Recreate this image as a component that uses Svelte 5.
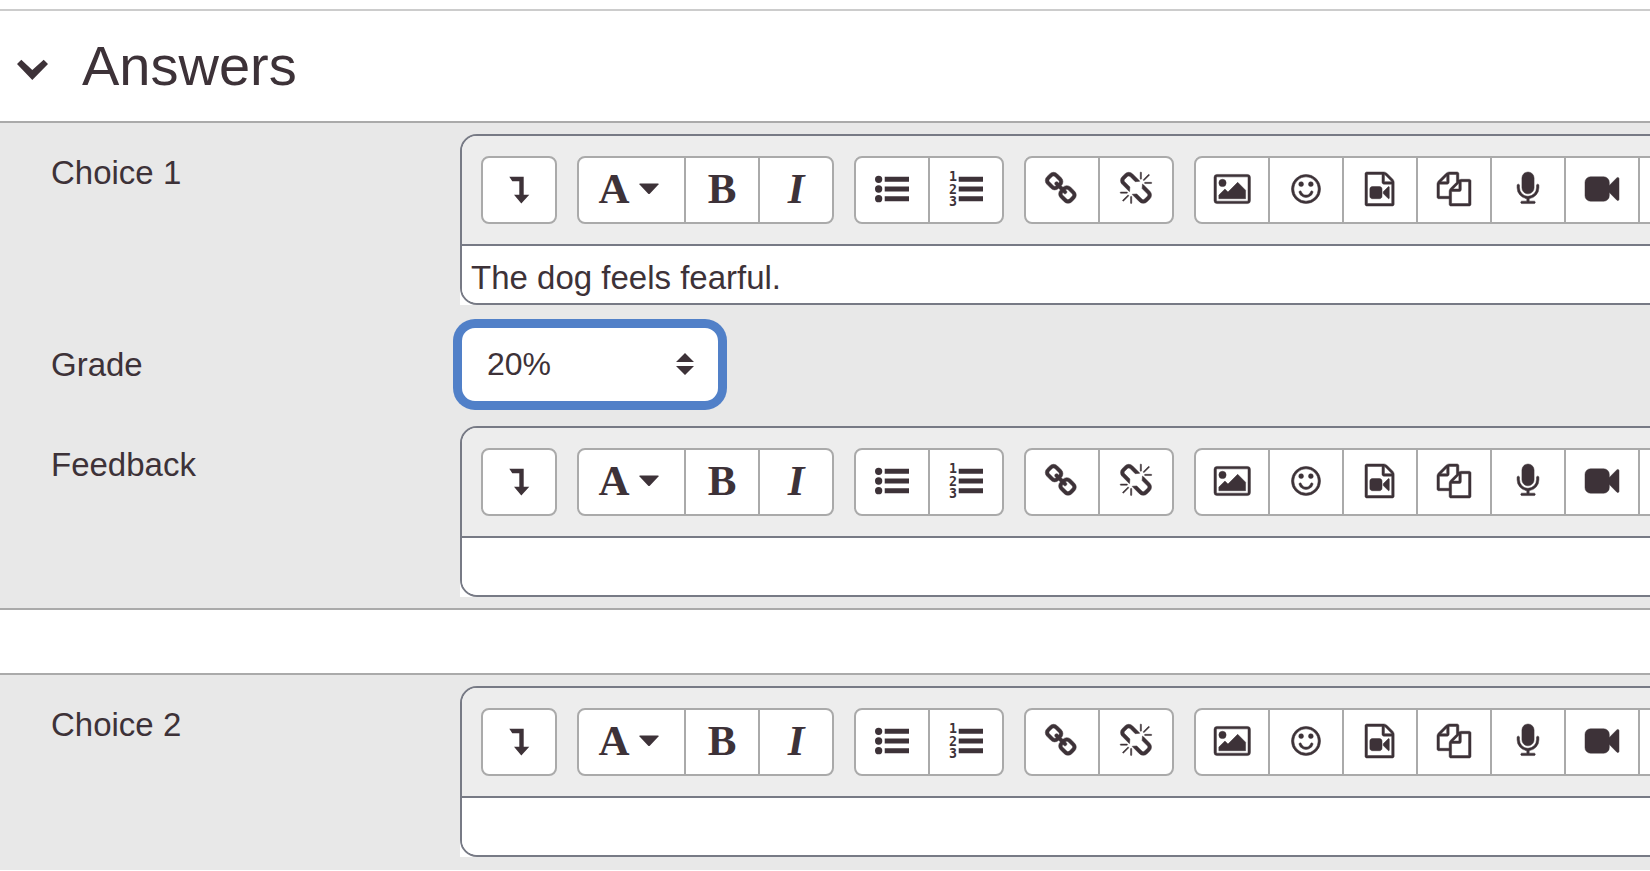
<script>
  let open = $state(true);
  let choices = $state([
    { id: 1, answer: 'The dog feels fearful.', grade: '20%', feedback: '', complete: true },
    { id: 2, answer: '', grade: 'None', feedback: '', complete: false }
  ]);
  const grades = ['None', '100%', '50%', '33.33333%', '25%', '20%', '10%'];

  const bullets =
    'M192 192a192 192 0 1 0 0 384a192 192 0 1 0 0-384zM192 704a192 192 0 1 0 0 384a192 192 0 1 0 0-384zM192 1216a192 192 0 1 0 0 384a192 192 0 1 0 0-384z';
  const bars = 'M512 256h1280v256H512zM512 768h1280v256H512zM512 1280h1280v256H512z';

  const linkGroup = [
    {
      label: 'Link',
      width: 1792,
      path: 'M1456 1216q0-40-28-68l-208-208q-28-28-68-28-42 0-72 32 3 3 19 18.5t21.5 21.5 15 19 13 25.5 3.5 27.5q0 40-28 68t-68 28q-15 0-27.5-3.5t-25.5-13-19-15-21.5-21.5-18.5-19q-33 31-33 73 0 40 28 68l206 207q27 27 68 27 40 0 68-26l147-146q28-28 28-67zm-703-705q0-40-28-68l-206-207q-28-28-68-28-39 0-68 27l-147 146q-28 28-28 67 0 40 28 68l208 208q27 27 68 27 42 0 72-31-3-3-19-18.5t-21.5-21.5-15-19-13-25.5-3.5-27.5q0-40 28-68t68-28q15 0 27.5 3.5t25.5 13 19 15 21.5 21.5 18.5 19q33-31 33-73zm895 705q0 120-85 203l-147 146q-83 83-203 83-121 0-204-85l-206-207q-83-83-83-203 0-123 88-209l-88-88q-86 88-208 88-120 0-204-84l-208-208q-84-84-84-204t85-203l147-146q83-83 203-83 121 0 204 85l206 207q83 83 83 203 0 123-88 209l88 88q86-88 208-88 120 0 204 84l208 208q84 84 84 204z'
    },
    {
      label: 'Unlink',
      width: 1792,
      path: 'M503 1271l-256 256q-10 9-23 9-12 0-23-9-9-10-9-23t9-23l256-256q10-9 23-9t23 9q9 10 9 23t-9 23zm169 41v320q0 14-9 23t-23 9-23-9-9-23v-320q0-14 9-23t23-9 23 9 9 23zm-224-224q0 14-9 23t-23 9h-320q-14 0-23-9t-9-23 9-23 23-9h320q14 0 23 9t9 23zm1264 128q0 120-85 203l-147 146q-83 83-203 83-121 0-204-85l-334-335q-21-21-42-56l239-18 273 274q28 28 68 28.5t68-27.5l147-146q28-28 28-67 0-40-28-68l-274-275 18-239q35 21 56 42l336 336q84 86 84 204zm-617-724l-239 18-273-274q-28-28-68-28-39 0-68 27l-147 146q-28 28-28 67 0 40 28 68l274 274-18 240q-35-21-56-42l-336-336q-84-86-84-204 0-120 85-203l147-146q83-83 203-83 121 0 204 85l334 335q21 21 42 56zm633 84q0 14-9 23t-23 9h-320q-14 0-23-9t-9-23 9-23 23-9h320q14 0 23 9t9 23zm-544-544v320q0 14-9 23t-23 9-23-9-9-23v-320q0-14 9-23t23-9 23 9 9 23zm407 151l-256 256q-11 9-23 9t-23-9q-9-10-9-23t9-23l256-256q10-9 23-9t23 9q9 10 9 23t-9 23z'
    }
  ];

  const mediaGroup = [
    {
      label: 'Insert image',
      width: 1920,
      path: 'M640 576a192 192 0 1 1-384 0a192 192 0 1 1 384 0zM1664 960v448H256v-192l320-320 160 160 512-512zM160 256q-32 0-32 32v1216q0 32 32 32h1600q32 0 32-32V288q0-32-32-32zM160 128h1600q160 0 160 160v1216q0 160-160 160H160Q0 1664 0 1504V288Q0 128 160 128z'
    },
    {
      label: 'Emoji picker',
      width: 1792,
      path: 'M1262 1075q-37 121-138 195t-228 74-228-74-138-195q-8-25 4-48.5t38-31.5q25-8 48.5 4t31.5 38q25 80 92.5 129.5t151.5 49.5 151.5-49.5 92.5-129.5q8-26 32-38t49-4 37 31.5 4 48.5zM768 640a128 128 0 1 1-256 0a128 128 0 1 1 256 0zM1280 640a128 128 0 1 1-256 0a128 128 0 1 1 256 0zM1536 896a640 640 0 1 0-1280 0a640 640 0 1 0 1280 0zM1664 896a768 768 0 1 1-1536 0a768 768 0 1 1 1536 0z'
    },
    {
      label: 'Insert media',
      width: 1536,
      path: 'M1468 380q28 28 48 76t20 88v1152q0 40-28 68t-68 28H96q-40 0-68-28t-28-68V96q0-40 28-68T96 0h896q40 0 88 20t76 48zm-444-244v376h376q-10-29-22-41l-313-313q-12-12-41-22zm384 1528V640H992q-40 0-68-28t-28-68V128H128v1536h1280zM768 768q52 0 90 38t38 90v384q0 52-38 90t-90 38H384q-52 0-90-38t-38-90V896q0-52 38-90t90-38h384zm492 2q20 8 20 30v576q0 22-20 30-8 2-12 2-14 0-23-9l-265-266v-90l265-266q9-9 23-9 4 0 12 2z'
    },
    {
      label: 'Manage files',
      width: 1792,
      path: 'M1696 384q40 0 68 28t28 68v1216q0 40-28 68t-68 28h-960q-40 0-68-28t-28-68v-288h-544q-40 0-68-28t-28-68v-672q0-40 20-88t48-76l408-408q28-28 76-48t88-20h416q40 0 68 28t28 68v328q68-40 128-40h416zm-544 213l-299 299h299v-299zm-640-384l-299 299h299v-299zm196 647l316-316v-416h-384v416q0 40-28 68t-68 28h-416v640h512v-256q0-40 20-88t48-76zm956 804v-1152h-384v416q0 40-28 68t-68 28h-416v640h896z'
    },
    {
      label: 'Record audio',
      width: 1792,
      path: 'M1472 704v128q0 221-147.5 384.5t-364.5 187.5v132h256q26 0 45 19t19 45-19 45-45 19h-640q-26 0-45-19t-19-45 19-45 45-19h256v-132q-217-24-364.5-187.5t-147.5-384.5v-128q0-26 19-45t45-19 45 19 19 45v128q0 185 131.5 316.5t316.5 131.5 316.5-131.5 131.5-316.5v-128q0-26 19-45t45-19 45 19 19 45zm-256-384v512q0 132-94 226t-226 94-226-94-94-226v-512q0-132 94-226t226-94 226 94 94 226z'
    },
    {
      label: 'Record video',
      width: 1792,
      path: 'M1792 352v1088q0 42-39 59-13 5-25 5-27 0-45-19l-403-403v166q0 119-84.5 203.5t-203.5 84.5h-704q-119 0-203.5-84.5t-84.5-203.5v-704q0-119 84.5-203.5t203.5-84.5h704q119 0 203.5 84.5t84.5 203.5v165l403-402q18-19 45-19 12 0 25 5 39 17 39 59z'
    },
    { label: 'Insert H5P', width: 1792, path: '' }
  ];
</script>

{#snippet iconButton(item)}
  <button type="button" aria-label={item.label}>
    <svg class="icon heavy" viewBox="0 0 {item.width} 1792" aria-hidden="true">
      <path d={item.path} fill-rule="evenodd" />
    </svg>
  </button>
{/snippet}

{#snippet editor(id, choice, field)}
  <div class="editor-back">
    <div class="editor">
      <div class="toolbar" role="toolbar" aria-label="Formatting">
        <div class="group">
          <button type="button" aria-label="Show more buttons">
            <svg class="icon" viewBox="0 0 34 34" aria-hidden="true">
              <path d="M7.3 4.7h14.4v18h5.6L19.3 31.5 12 22.7h5.3V9.3h-7z" />
            </svg>
          </button>
        </div>
        <div class="group">
          <button type="button" class="styles" aria-label="Paragraph styles">
            <span class="letter">A</span>
            <svg class="caret" viewBox="0 0 20 12" aria-hidden="true">
              <path d="M1 0.5h18q1 0 .5 1L11 10.5q-1 1-2 0L.5 1.5Q0 .5 1 .5z" />
            </svg>
          </button>
          <button type="button" aria-label="Bold"><span class="letter">B</span></button>
          <button type="button" aria-label="Italic"><span class="letter italic">I</span></button>
        </div>
        <div class="group">
          <button type="button" aria-label="Unordered list">
            <svg class="icon" viewBox="0 0 1792 1792" aria-hidden="true"><path d={bullets + bars} /></svg>
          </button>
          <button type="button" aria-label="Ordered list">
            <svg class="icon" viewBox="0 0 1792 1792" aria-hidden="true">
              <path d={bars} />
              <g class="digits">
                <text x="0" y="480">1</text>
                <text x="0" y="1145">2</text>
                <text x="0" y="1810">3</text>
              </g>
            </svg>
          </button>
        </div>
        <div class="group">
          {#each linkGroup as item}{@render iconButton(item)}{/each}
        </div>
        <div class="group">
          {#each mediaGroup as item}{@render iconButton(item)}{/each}
        </div>
      </div>
      <textarea {id} rows="1" bind:value={choice[field]}></textarea>
    </div>
  </div>
{/snippet}

<main>
  <header>
    <button type="button" class="toggle" aria-label="Toggle answers" aria-expanded={open} onclick={() => (open = !open)}>
      <svg viewBox="0 0 32 32" aria-hidden="true">
        <path d="M1 14L5.3 9.7 16.3 20 27.7 9.7 32 14 16.3 30z" />
      </svg>
    </button>
    <h2>Answers</h2>
  </header>

  {#if open}
    {#each choices as choice (choice.id)}
      <section class:last={!choice.complete}>
        <div class="row">
          <label for="answer-{choice.id}">Choice {choice.id}</label>
          {@render editor(`answer-${choice.id}`, choice, 'answer')}
        </div>
        {#if choice.complete}
          <div class="row grade">
            <label for="grade-{choice.id}">Grade</label>
            <select id="grade-{choice.id}" bind:value={choice.grade}>
              {#each grades as grade}<option>{grade}</option>{/each}
            </select>
          </div>
          <div class="row">
            <label for="feedback-{choice.id}">Feedback</label>
            {@render editor(`feedback-${choice.id}`, choice, 'feedback')}
          </div>
        {/if}
      </section>
    {/each}
  {/if}
</main>

<style>
  :global(body) {
    margin: 0;
    background: #fff;
  }

  main {
    overflow: hidden;
    padding-top: 9px;
    color: #3d3238;
    font-family: 'Liberation Sans', Arial, sans-serif;
    font-size: 33px;
    line-height: 40px;
  }

  header {
    display: flex;
    align-items: center;
    gap: 34px;
    height: 110px;
    padding-left: 16px;
    border-top: 2px solid #ccc;
  }

  h2 {
    margin: 0;
    font-size: 56px;
    font-weight: 400;
    line-height: 64px;
  }

  .toggle {
    display: flex;
    padding: 0;
    border: 0;
    background: none;
  }

  .toggle svg {
    width: 32px;
    height: 32px;
    fill: #3d3238;
  }

  section {
    display: flex;
    flex-direction: column;
    gap: 21px;
    margin-bottom: 63px;
    padding: 11px 0;
    border-top: 2px solid #aaa;
    border-bottom: 2px solid #aaa;
    background: #e8e8e8;
  }

  section.last {
    margin-bottom: 0;
    padding-bottom: 13px;
    border-bottom: 0;
  }

  .row {
    display: grid;
    grid-template-columns: 409px minmax(0, 1fr);
    padding-left: 51px;
  }

  .row label {
    padding-top: 19px;
    justify-self: start;
  }

  .grade {
    padding-bottom: 2px;
  }

  select {
    appearance: none;
    box-sizing: border-box;
    width: 260px;
    height: 77px;
    padding: 0 40px 2px 25px;
    border: 2px solid #5180c8;
    border-radius: 15px;
    outline: 0;
    box-shadow: 0 0 0 7px #5180c8;
    background: #fff
      url("data:image/svg+xml,%3Csvg xmlns='http://www.w3.org/2000/svg' viewBox='0 0 18 22'%3E%3Cpath fill='%233d3238' d='M9 0l9 9H0zM0 13h18l-9 9z'/%3E%3C/svg%3E")
      right 24px top 25px / 18px 22px no-repeat;
    color: inherit;
    font: inherit;
    font-size: 32px;
  }

  .editor-back {
    margin-right: -24px;
    background: linear-gradient(#fff, #fff) bottom / 100% 24px no-repeat;
  }

  .editor {
    overflow: hidden;
    border: 2px solid #777a85;
    border-radius: 17px;
    background: #fff;
  }

  .toolbar {
    display: flex;
    gap: 20px;
    padding: 20px 19px;
    border-bottom: 2px solid #777a85;
    background: #ededed;
  }

  .group {
    display: flex;
    flex: none;
  }

  .group button {
    display: flex;
    align-items: center;
    justify-content: center;
    box-sizing: border-box;
    width: 76px;
    height: 68px;
    padding: 0 0 2px;
    border: 2px solid #aaa;
    background: #fff;
    color: inherit;
  }

  .group button + button {
    margin-left: -2px;
  }

  .group button:first-child {
    border-top-left-radius: 8px;
    border-bottom-left-radius: 8px;
  }

  .group button:last-child {
    border-top-right-radius: 8px;
    border-bottom-right-radius: 8px;
  }

  .group .styles {
    gap: 9px;
    width: 109px;
    padding-right: 6px;
  }

  .icon {
    flex: none;
    height: 34px;
    fill: #3d3238;
    overflow: visible;
  }

  .heavy {
    stroke: #3d3238;
    stroke-width: 26;
  }

  .caret {
    width: 20px;
    height: 12px;
    fill: #3d3238;
  }

  .letter {
    font-family: 'Liberation Serif', 'Times New Roman', serif;
    font-size: 43px;
    font-weight: 700;
    line-height: 48px;
  }

  .italic {
    font-style: italic;
  }

  .digits {
    font-family: 'DejaVu Sans Mono', monospace;
    font-size: 700px;
    font-weight: 700;
  }

  textarea {
    display: block;
    box-sizing: border-box;
    width: 100%;
    height: 57px;
    padding: 12px 9px 0;
    border: 0;
    outline: 0;
    overflow: hidden;
    resize: none;
    background: #fff;
    color: inherit;
    font: inherit;
  }
</style>
